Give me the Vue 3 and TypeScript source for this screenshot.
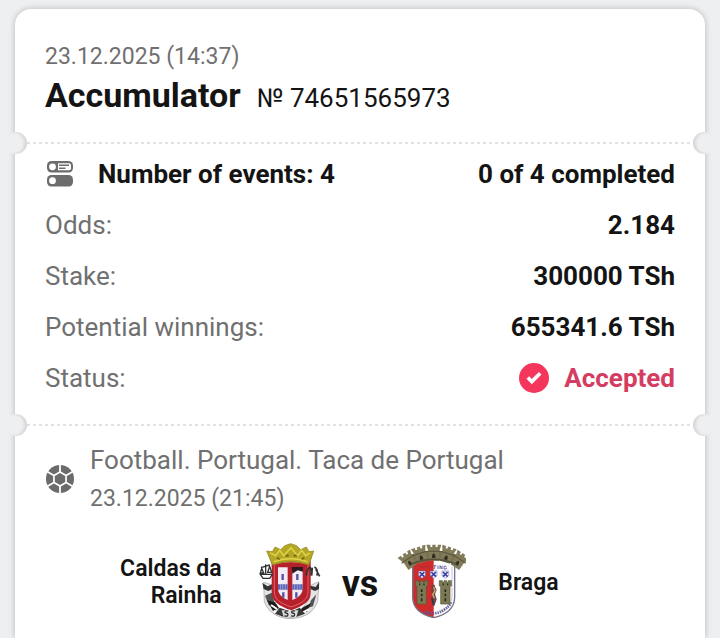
<script setup lang="ts">
interface SummaryRow {
  label: string
  value: string
}

const coupon = {
  date: '23.12.2025 (14:37)',
  type: 'Accumulator',
  number: '№ 74651565973',
  events: 'Number of events: 4',
  progress: '0 of 4 completed',
  status: 'Accepted',
}

const rows: SummaryRow[] = [
  { label: 'Odds:', value: '2.184' },
  { label: 'Stake:', value: '300000 TSh' },
  { label: 'Potential winnings:', value: '655341.6 TSh' },
]

const match = {
  league: 'Football. Portugal. Taca de Portugal',
  date: '23.12.2025 (21:45)',
  home: 'Caldas da Rainha',
  away: 'Braga',
}

const hexAngles = [0, 60, 120, 180, 240, 300]
const crownAngles = [-34, -17, 0, 17, 34]
const shieldColumns = [87, 122, 157]
const towerColumns = [86, 157]
</script>

<template>
  <main class="page">
    <article class="coupon">
      <header class="head">
        <time class="date">{{ coupon.date }}</time>
        <div class="title-line">
          <h1 class="title">{{ coupon.type }}</h1>
          <span class="number">{{ coupon.number }}</span>
        </div>
      </header>

      <div class="tear"><i class="notch left"></i><i class="notch right"></i></div>

      <section class="summary">
        <div class="row strong">
          <span class="events">
            <svg class="list-icon" viewBox="0 0 26 26" aria-hidden="true">
              <rect width="26" height="11.5" rx="4.5" fill="#6d6d6d" />
              <circle cx="5.5" cy="5.8" r="3.4" fill="#fff" />
              <path d="M11 2.2h11q2 0 2 2v3q0 2-2 2H11z" fill="#fff" />
              <path d="M12 4.3h10M12 7.2h6.500" stroke="#6d6d6d" stroke-width="1.5" />
              <rect y="14" width="26" height="11.5" rx="4.5" fill="#6d6d6d" />
              <circle cx="5.5" cy="19.7" r="3.4" fill="#fff" />
            </svg>
            {{ coupon.events }}
          </span>
          <span>{{ coupon.progress }}</span>
        </div>
        <dl class="rows">
          <div v-for="row in rows" :key="row.label" class="row">
            <dt>{{ row.label }}</dt>
            <dd>{{ row.value }}</dd>
          </div>
          <div class="row">
            <dt>Status:</dt>
            <dd class="status">
              <svg class="check" viewBox="0 0 30 30" aria-hidden="true">
                <circle cx="15" cy="15" r="15" fill="#f5365c" />
                <path d="M8.8 14.600l4 4 8.400-8.400" fill="none" stroke="#fff" stroke-width="3.6" />
              </svg>
              {{ coupon.status }}
            </dd>
          </div>
        </dl>
      </section>

      <div class="tear"><i class="notch left"></i><i class="notch right"></i></div>

      <section class="match">
        <div class="match-head">
          <svg class="ball" viewBox="-15 -15 30 30" aria-hidden="true">
            <circle r="14" fill="#6b6b6b" />
            <path d="M0-8L6.900-4V4L0 8-6.900 4V-4z" fill="#fff" />
            <path
              v-for="angle in hexAngles"
              :key="angle"
              d="M0-7v-8"
              :transform="`rotate(${angle})`"
              stroke="#fff"
              stroke-width="1.8"
            />
            <path d="M0-6L5.200-3V3L0 6-5.200 3V-3z" fill="#6b6b6b" />
          </svg>
          <div class="match-info">
            <span class="league">{{ match.league }}</span>
            <time class="date">{{ match.date }}</time>
          </div>
        </div>

        <div class="teams">
          <span class="team home">{{ match.home }}</span>
          <div class="versus">
            <svg class="crest" viewBox="9 21 216 240" role="img" aria-label="Caldas da Rainha">
              <!-- mantling behind the shield -->
              <path d="M38 142l26 8v40l20 30 35 14 35-14 22-30v-38l28-12-4 60q-14 36-50 46-32 10-62 0-36-12-48-46z" fill="#e4e4e4" stroke="#9a9a9a" stroke-width="2" />
              <path d="M34 144l16 10 14-6v14l-12 6-14-6zM204 142l-10 14-16-4v10l14 6 12-6z" fill="#333" />
              <path d="M42 182l24-10 4 36-16 4zM196 178l-16 18-8 22 14-4z" fill="#555" />
              <path d="M48 196l24 6 12 18-18 8zM180 204l-26 14-12 18 26-6z" fill="#1d1d1d" />
              <path d="M60 210l18 12M82 236l-14-8M174 222l-18 10" stroke="#fff" stroke-width="6" />
              <path d="M72 236q46 22 90 0l-16-18-26 12-34-12z" fill="#3a3a3a" />
              <!-- shield -->
              <path d="M62 78q57-18 117 0v92c0 30-20 40-58 56-40-14-59-28-59-56z" fill="#b5202b" />
              <path d="M70 88q50-14 101 0v82c0 24-18 34-50 46-34-12-51-22-51-46z" fill="none" stroke="#e0646a" stroke-width="3" />
              <path d="M81 97h29v98q-29-12-29-34zM124 97h31v64q0 22-31 34z" fill="#f1ecf6" />
              <path d="M122 96h34v14l-16-4-16 10z" fill="#2b1a20" />
              <path d="M81 148h29v16H81zM124 148h31v16h-31z" fill="#5a62b4" />
              <path d="M88 146v20M95 146v20M103 146v20M131 146v20M139 146v20M147 146v20" stroke="#b9bce2" stroke-width="2" />
              <path d="M95 117v18M139 117v18M97 172v16M136 172v16" stroke="#5152a0" stroke-width="7" />
              <!-- crown -->
              <path d="M64 90L47 48l17 2 8-14 17 8 12-12 18-6 18 6 12 12 17-8 8 14 14-2-14 42q-55-20-110 0z" fill="#b5a626" stroke="#857b14" stroke-width="2" />
              <path d="M58 54l16 8 12-16 12 16 22-24 20 24 12-16 12 16 12-8M68 80q51-18 102 0" fill="none" stroke="#dcd247" stroke-width="5" />
              <path d="M78 68l8 5M104 62h9M128 62h9M160 68l-8 5" stroke="#6c6510" stroke-width="5" />
              <!-- side emblems -->
              <path d="M30 98l26-8M44 88v28M32 100l-4 14h10zM56 94l-6 18h12zM28 118h36l-8 12H36z" fill="none" stroke="#333" stroke-width="4" />
              <path d="M166 122q2-24 12-24 5 10 2 24M184 98l-2 24M190 96q12 4 8 26M194 102l12 22" fill="none" stroke="#333" stroke-width="5" />
              <!-- ribbon -->
              <path d="M92 226h50l-6 20h-38z" fill="#ddd" />
              <path d="M112 228q-12-2-10 5 12 2 8 9-4 3-10 0M132 228q-12-2-10 5 12 2 8 9-4 3-10 0" fill="none" stroke="#222" stroke-width="3.5" />
            </svg>
            <span class="vs">vs</span>
            <svg class="crest" viewBox="3 21 216 240" role="img" aria-label="Braga">
              <!-- shield halves -->
              <path d="M59 84q62-24 126 0v104q-2 46-63 60-61-14-63-60z" fill="#fbfafc" />
              <path d="M59 84q30-12 63-12v176q-61-14-63-60z" fill="#ce2b2a" />
              <path d="M59 84v104q2 46 63 60 61-14 63-60V84" fill="none" stroke="#77758c" stroke-width="4" />
              <path d="M177 94v92q-3 32-34 44" fill="none" stroke="#b4b3cf" stroke-width="2" />
              <!-- mural crown -->
              <path d="M49 92L36 64q84-34 172 0l-13 28q-74-34-146 0z" fill="#77714f" />
              <g v-for="angle in crownAngles" :key="angle" :transform="`rotate(${angle} 122 190)`">
                <path d="M100 29h12v7h6v-7h10v7h6v-7h11l-7 23v25h-31V52z" fill="#817b59" />
                <path d="M101 49h42" stroke="#59543a" stroke-width="3" />
                <path d="M117 69v-8l5-7 5 7v8z" fill="#302e20" />
              </g>
              <path d="M54 88q67-30 136 0" fill="none" stroke="#57523a" stroke-width="5" />
              <!-- lettering strip -->
              <path d="M125 92v10M122 92h8M135 92v10M141 102V92l6 10V92M160 94h-7v8h7v-4" fill="none" stroke="#56539a" stroke-width="2.500" />
              <path d="M84 96h28" stroke="#94303d" stroke-width="5" stroke-dasharray="3 5" />
              <path d="M92 230q34 12 58-4 20-12 24-24" fill="none" stroke="#625a98" stroke-width="8" stroke-dasharray="4 3" />
              <!-- blue escutcheons -->
              <g v-for="x in shieldColumns" :key="x" :transform="`translate(${x} 118)`">
                <path d="M-10-10h20V4L0 12-10 4z" fill="#f4f3fb" stroke="#6a67b0" stroke-width="1.500" />
                <path d="M-7-7l14 14M7-7L-7 7" stroke="#393c9c" stroke-width="5" />
              </g>
              <!-- castle towers -->
              <g v-for="x in towerColumns" :key="x" :transform="`translate(${x} 0)`">
                <path d="M-18 137h9v5h5v-5h8v5h5v-5h9v16h-4v54h-28v-54h-4z" fill="#7c7a54" stroke="#5a5836" stroke-width="2" />
                <path d="M-8 148h4M5 148h4M0 163v8M0 176v8M0 190v9" stroke="#25291b" stroke-width="5" />
              </g>
              <!-- central figure -->
              <path d="M118 150q8-4 8 5l5 10-5 12 5 16-7 20h-6l-3-20 3-14-4-12z" fill="#70463a" />
              <path d="M122 156l4 12-7 10 5 12" fill="none" stroke="#d2a77a" stroke-width="4" />
              <path d="M116 188l6 20" stroke="#2e3157" stroke-width="4" />
            </svg>
          </div>
          <span class="team away">{{ match.away }}</span>
        </div>
      </section>
    </article>
  </main>
</template>

<style>
body {
  margin: 0;
  background: #eeeff1;
}
</style>

<style scoped>
.page {
  box-sizing: border-box;
  display: flex;
  min-height: 100vh;
  padding: 9px 15px 0;
  overflow: hidden;
  background: #eeeff1;
  color: #141414;
  font-family: Roboto, 'Liberation Sans', sans-serif;
  font-size: 26px;
}

.coupon {
  flex: 1;
  min-width: 0;
  border-radius: 16px 16px 0 0;
  background: #fff;
  box-shadow: 0 0 6px rgba(0, 0, 0, 0.24);
}

.head {
  display: flex;
  flex-direction: column;
  padding: 33px 30px 21px;
}

.date {
  color: #707070;
  font-size: 23px;
  line-height: 30px;
}

.title-line {
  display: flex;
  align-items: baseline;
  gap: 16px;
  line-height: 46px;
}

.title {
  margin: 0;
  font-size: 34px;
  font-weight: 700;
}

.tear {
  position: relative;
  height: 2px;
  margin: 0 12px;
  background: repeating-linear-gradient(90deg, #e2e2e2 0 3px, transparent 3px 6px);
}

.notch {
  position: absolute;
  top: -10px;
  width: 22px;
  height: 22px;
  overflow: hidden;
  border-radius: 50%;
}

.left {
  left: -22px;
  background: radial-gradient(circle at 8px 11px, #eeeff1 9px, #d2d2d3 14px);
}

.right {
  right: -22px;
  background: radial-gradient(circle at 14px 11px, #eeeff1 9px, #d2d2d3 14px);
}

.left {
  clip-path: inset(0 0 0 4px);
}

.right {
  clip-path: inset(0 4px 0 0);
}

.summary {
  padding: 4px 30px 21px;
}

.rows,
dd {
  margin: 0;
}

.row {
  display: flex;
  align-items: center;
  justify-content: space-between;
  height: 51px;
}

.strong,
dd {
  font-weight: 700;
}

dt {
  color: #707070;
}

.events {
  display: flex;
  align-items: center;
  gap: 25px;
}

.list-icon {
  width: 26px;
  height: 26px;
  margin-left: 2px;
}

.status {
  display: flex;
  align-items: center;
  gap: 15px;
  color: #d43d61;
}

.check {
  width: 30px;
  height: 30px;
}

.match {
  padding: 14px 30px 16px;
}

.match-head {
  display: flex;
  align-items: center;
  gap: 15px;
}

.ball {
  width: 30px;
  height: 30px;
  margin-top: 4px;
}

.match-info {
  display: flex;
  flex-direction: column;
  gap: 4px;
}

.league {
  color: #707070;
  line-height: 40px;
}

.teams {
  display: grid;
  grid-template-columns: 1fr auto 1fr;
  align-items: center;
  gap: 32px;
  margin-top: 28px;
}

.team {
  max-width: 120px;
  font-size: 23px;
  font-weight: 600;
  line-height: 27px;
}

.home {
  justify-self: end;
  text-align: right;
}

.versus {
  display: flex;
  align-items: center;
  gap: 16px;
}

.crest {
  width: 72px;
  height: 80px;
}

.vs {
  padding-top: 4px;
  font-size: 36px;
  font-weight: 700;
  line-height: 40px;
}
</style>
